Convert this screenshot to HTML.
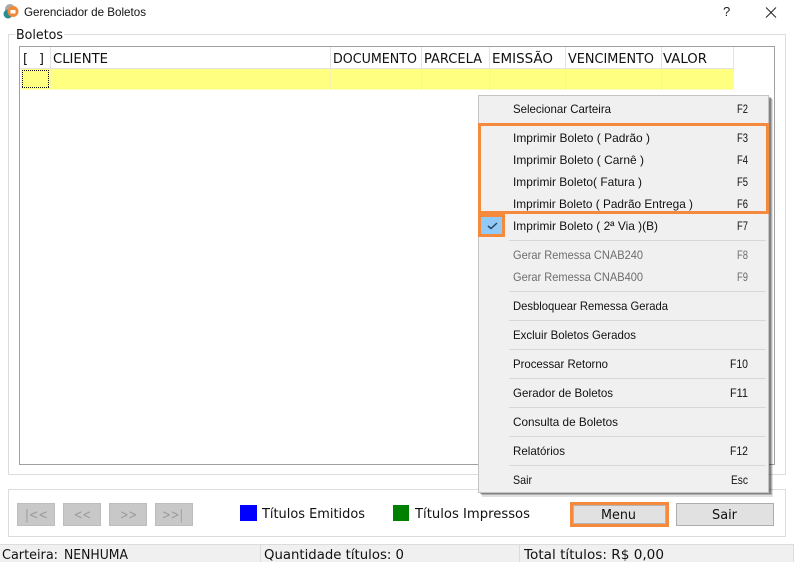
<!DOCTYPE html>
<html><head><meta charset="utf-8"><style>
html,body{margin:0;padding:0;background:#fff;width:794px;height:562px;overflow:hidden}
svg{display:block}
.m{font:12px "Liberation Sans",sans-serif;fill:#111}
.d{font:12px "Liberation Sans",sans-serif;fill:#6d6d6d}
.t{font:13px "DejaVu Sans",sans-serif;fill:#111}
</style></head><body>
<svg width="794" height="562" viewBox="0 0 794 562" xmlns="http://www.w3.org/2000/svg">
<rect width="794" height="562" fill="#fff"/>
<!-- title icon -->
<circle cx="10" cy="9" r="5" fill="#a9a9a9"/>
<circle cx="8" cy="14" r="4.5" fill="#2a8c94"/>
<circle cx="13" cy="11.500" r="5.500" fill="#ee8a3a"/>
<rect x="10.500" y="10" width="5" height="3.500" fill="#fff"/>
<text class="m" x="24" y="16" textLength="122" lengthAdjust="spacingAndGlyphs">Gerenciador de Boletos</text>
<text x="723" y="16" font-family="Liberation Sans, sans-serif" font-size="13" fill="#222">?</text>
<path d="M766 7.500L776 17.500M776 7.500L766 17.500" stroke="#222" stroke-width="1" fill="none"/>

<!-- group box -->
<path d="M15 34.500H8.500V474.500H785.500V34.500H64" fill="none" stroke="#dcdcdc"/>
<text class="t" x="16" y="39" textLength="47" lengthAdjust="spacingAndGlyphs">Boletos</text>

<!-- grid -->
<rect x="19.500" y="46.500" width="755" height="418" fill="#fff" stroke="#a0a0a0"/>
<g stroke="#e3e3e3">
<path d="M20 68.500H734M50.500 47V68M330.500 47V68M421.500 47V68M489.500 47V68M565.500 47V68M661.500 47V68M733.500 47V68"/>
</g>
<rect x="21" y="69" width="713" height="20.500" fill="#ffff80"/>
<path d="M50.500 69V90M330.500 69V90M421.500 69V90M489.500 69V90M565.500 69V90M661.500 69V90" stroke="#f4f4a8"/>
<path d="M22 70.500H49M22 87.500H49M22.500 70V88M48.500 70V88" fill="none" stroke="#111" stroke-dasharray="1 1"/>
<text class="t" x="23" y="63" textLength="21" lengthAdjust="spacing">[  ]</text>
<text class="t" x="53" y="63" textLength="55" lengthAdjust="spacingAndGlyphs">CLIENTE</text>
<text class="t" x="333" y="63" textLength="84" lengthAdjust="spacingAndGlyphs">DOCUMENTO</text>
<text class="t" x="424" y="63" textLength="58" lengthAdjust="spacingAndGlyphs">PARCELA</text>
<text class="t" x="492" y="63" textLength="61" lengthAdjust="spacingAndGlyphs">EMISSÃO</text>
<text class="t" x="568" y="63" textLength="86" lengthAdjust="spacingAndGlyphs">VENCIMENTO</text>
<text class="t" x="663" y="63" textLength="44" lengthAdjust="spacingAndGlyphs">VALOR</text>

<!-- bottom group -->
<rect x="8.500" y="489.500" width="777" height="47" fill="#fff" stroke="#dcdcdc"/>
<g fill="#c8c8c8" stroke="#bdbdbd">
<rect x="17.500" y="503.500" width="37" height="22"/>
<rect x="63.500" y="503.500" width="37" height="22"/>
<rect x="109.500" y="503.500" width="37" height="22"/>
<rect x="155.500" y="503.500" width="37" height="22"/>
</g>
<g font-family="DejaVu Sans, sans-serif" font-size="13" fill="#9a9a9a">
<text x="25" y="519" textLength="23" lengthAdjust="spacingAndGlyphs">|&lt;&lt;</text>
<text x="74" y="519" textLength="17" lengthAdjust="spacingAndGlyphs">&lt;&lt;</text>
<text x="120" y="519" textLength="17" lengthAdjust="spacingAndGlyphs">&gt;&gt;</text>
<text x="162" y="519" textLength="21" lengthAdjust="spacingAndGlyphs">&gt;&gt;|</text>
</g>
<rect x="240" y="505" width="17" height="16" fill="#0000ff"/>
<rect x="393" y="505" width="16" height="16" fill="#008000"/>
<text class="t" x="262" y="518" textLength="103" lengthAdjust="spacingAndGlyphs">Títulos Emitidos</text>
<text class="t" x="415" y="518" textLength="115" lengthAdjust="spacingAndGlyphs">Títulos Impressos</text>

<!-- buttons -->
<rect x="571.500" y="503.500" width="96" height="22" fill="#e1e1e1" stroke="#f58a3c" stroke-width="3"/>
<rect x="573.500" y="505.500" width="92" height="18" fill="#e1e1e1" stroke="#b4b4b4"/>
<rect x="676.500" y="503.500" width="97" height="22" fill="#e1e1e1" stroke="#adadad"/>
<text class="t" x="601" y="519" textLength="35" lengthAdjust="spacingAndGlyphs">Menu</text>
<text class="t" x="712" y="519" textLength="25" lengthAdjust="spacingAndGlyphs">Sair</text>

<!-- status bar -->
<rect x="0" y="544" width="794" height="18" fill="#f0f0f0"/>
<path d="M0 544.500H794M260.500 545V562M519.500 545V562M793.500 545V562" stroke="#dcdcdc"/>
<text class="t" x="2" y="559" textLength="56" lengthAdjust="spacingAndGlyphs">Carteira:</text>
<text class="t" x="64" y="559" textLength="64" lengthAdjust="spacingAndGlyphs">NENHUMA</text>
<text class="t" x="264" y="559" textLength="140" lengthAdjust="spacingAndGlyphs">Quantidade títulos: 0</text>
<text class="t" x="524" y="559" textLength="140" lengthAdjust="spacingAndGlyphs">Total títulos: R$ 0,00</text>

<!-- menu shadow -->
<rect x="482" y="99" width="291" height="398" fill="#000" opacity=".12"/>
<rect x="481" y="98" width="291" height="397" fill="#000" opacity=".22"/>
<rect x="480" y="97" width="291" height="397" fill="#000" opacity=".25"/>
<!-- menu -->
<rect x="478.500" y="95.500" width="290" height="397" fill="#f0f0f0" stroke="#c4c4c4"/>
<path d="M509 240.500H766M509 291.500H766M509 320.500H766M509 349.500H766M509 378.500H766M509 407.500H766M509 436.500H766M509 465.500H766" stroke="#d7d7d7"/>
<rect x="479.500" y="215.500" width="24" height="20" fill="#91c9f7"/>
<path d="M488 226L491 228.500L497 223" fill="none" stroke="#2a4460" stroke-width="1.500"/>
<rect x="479.500" y="124.500" width="288" height="88" fill="none" stroke="#f58a3c" stroke-width="3"/>
<rect x="479.500" y="215.500" width="24" height="20" fill="none" stroke="#f58a3c" stroke-width="3"/>

<text class="m" x="513" y="113" textLength="98" lengthAdjust="spacingAndGlyphs">Selecionar Carteira</text>
<text class="m" x="737" y="113" textLength="11" lengthAdjust="spacingAndGlyphs">F2</text>
<text class="m" x="513" y="142" textLength="137" lengthAdjust="spacingAndGlyphs">Imprimir Boleto ( Padrão )</text>
<text class="m" x="737" y="142" textLength="11" lengthAdjust="spacingAndGlyphs">F3</text>
<text class="m" x="513" y="164" textLength="131" lengthAdjust="spacingAndGlyphs">Imprimir Boleto ( Carnê )</text>
<text class="m" x="737" y="164" textLength="11" lengthAdjust="spacingAndGlyphs">F4</text>
<text class="m" x="513" y="186" textLength="129" lengthAdjust="spacingAndGlyphs">Imprimir Boleto( Fatura )</text>
<text class="m" x="737" y="186" textLength="11" lengthAdjust="spacingAndGlyphs">F5</text>
<text class="m" x="513" y="208" textLength="180" lengthAdjust="spacingAndGlyphs">Imprimir Boleto ( Padrão Entrega )</text>
<text class="m" x="737" y="208" textLength="11" lengthAdjust="spacingAndGlyphs">F6</text>
<text class="m" x="513" y="230" textLength="145" lengthAdjust="spacingAndGlyphs">Imprimir Boleto ( 2ª Via )(B)</text>
<text class="m" x="737" y="230" textLength="11" lengthAdjust="spacingAndGlyphs">F7</text>
<text class="d" x="513" y="259" textLength="130" lengthAdjust="spacingAndGlyphs">Gerar Remessa CNAB240</text>
<text class="d" x="737" y="259" textLength="11" lengthAdjust="spacingAndGlyphs">F8</text>
<text class="d" x="513" y="281" textLength="130" lengthAdjust="spacingAndGlyphs">Gerar Remessa CNAB400</text>
<text class="d" x="737" y="281" textLength="11" lengthAdjust="spacingAndGlyphs">F9</text>
<text class="m" x="513" y="310" textLength="155" lengthAdjust="spacingAndGlyphs">Desbloquear Remessa Gerada</text>
<text class="m" x="513" y="339" textLength="123" lengthAdjust="spacingAndGlyphs">Excluir Boletos Gerados</text>
<text class="m" x="513" y="368" textLength="95" lengthAdjust="spacingAndGlyphs">Processar Retorno</text>
<text class="m" x="730" y="368" textLength="18" lengthAdjust="spacingAndGlyphs">F10</text>
<text class="m" x="513" y="397" textLength="100" lengthAdjust="spacingAndGlyphs">Gerador de Boletos</text>
<text class="m" x="730" y="397" textLength="18" lengthAdjust="spacingAndGlyphs">F11</text>
<text class="m" x="513" y="426" textLength="105" lengthAdjust="spacingAndGlyphs">Consulta de Boletos</text>
<text class="m" x="513" y="455" textLength="52" lengthAdjust="spacingAndGlyphs">Relatórios</text>
<text class="m" x="730" y="455" textLength="18" lengthAdjust="spacingAndGlyphs">F12</text>
<text class="m" x="513" y="484" textLength="19" lengthAdjust="spacingAndGlyphs">Sair</text>
<text class="m" x="731" y="484" textLength="17" lengthAdjust="spacingAndGlyphs">Esc</text>
</svg>
</body></html>
